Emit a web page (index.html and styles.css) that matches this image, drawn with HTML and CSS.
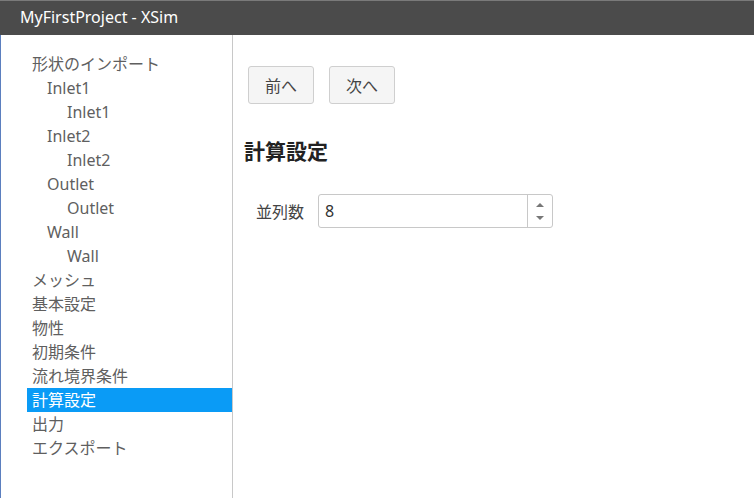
FILE: index.html
```html
<!DOCTYPE html>
<html lang="ja">
<head>
    <meta charset="UTF-8">
    <title>MyFirstProject - XSim</title>
    <link rel="stylesheet" href="styles.css">
</head>
<body>
    <!-- タイトルバー -->
    <div class="titlebar">MyFirstProject - XSim</div>

    <div class="window">
        <!-- 左のツリー -->
        <ul class="tree">
            <li class="lv0">形状のインポート</li>
            <li class="lv1">Inlet1</li>
            <li class="lv2">Inlet1</li>
            <li class="lv1">Inlet2</li>
            <li class="lv2">Inlet2</li>
            <li class="lv1">Outlet</li>
            <li class="lv2">Outlet</li>
            <li class="lv1">Wall</li>
            <li class="lv2">Wall</li>
            <li class="lv0">メッシュ</li>
            <li class="lv0">基本設定</li>
            <li class="lv0">物性</li>
            <li class="lv0">初期条件</li>
            <li class="lv0">流れ境界条件</li>
            <li class="lv0 selected">計算設定</li>
            <li class="lv0">出力</li>
            <li class="lv0">エクスポート</li>
        </ul>

        <!-- 右の設定画面 -->
        <div class="main">
            <div class="nav">
                <button class="btn">前へ</button>
                <button class="btn">次へ</button>
            </div>
            <h2>計算設定</h2>
            <div class="field">
                <label>並列数</label>
                <div class="spin">
                    <input type="text" value="8">
                    <div class="arrows">
                        <span class="up"></span>
                        <span class="down"></span>
                    </div>
                </div>
            </div>
        </div>
    </div>
</body>
</html>
```

FILE: styles.css
```css
body {
    margin: 0;
    padding: 0;
    font-family: "Noto Sans", "Noto Sans CJK JP", sans-serif;
    background: #fff;
    height: 498px;
    display: flex;
    flex-direction: column;
    overflow: hidden;
}

.titlebar {
    height: 34px;
    line-height: 33px;
    background: #4b4b4b;
    border-top: 1px solid #7a7a7a;
    color: #fff;
    font-size: 16px;
    padding-left: 20px;
}

.window {
    flex: 1;
    display: flex;
    border-left: 1px solid #5b7fbf;
}

/* ツリー */
.tree {
    list-style: none;
    margin: 0;
    padding: 17px 0 0 26px;
    width: 205px;
    border-right: 1px solid #c8c8c8;
    flex-shrink: 0;
}

.tree li {
    height: 24px;
    line-height: 24px;
    font-size: 16px;
    color: #5f5f5f;
    white-space: nowrap;
}

.tree .lv0 { padding-left: 5px; }
.tree .lv1 { padding-left: 20px; }
.tree .lv2 { padding-left: 40px; }

.tree .selected {
    background: #0a9bf6;
    color: #fff;
}

/* メイン */
.main {
    flex: 1;
    padding: 31px 0 0 11px;
    color: #333;
}

.nav {
    display: flex;
    gap: 15px;
    padding-left: 4px;
}

.btn {
    width: 66px;
    height: 38px;
    background: #f5f5f5;
    border: 1px solid #cfcfcf;
    border-radius: 3px;
    font-family: inherit;
    font-size: 16px;
    color: #444;
    padding: 0;
}

h2 {
    margin: 32px 0 0;
    font-size: 21px;
    font-weight: bold;
    color: #222;
    line-height: 30px;
}

.field {
    display: flex;
    align-items: center;
    margin-top: 28px;
    padding-left: 12px;
}

.field label {
    font-size: 16px;
    color: #444;
    width: 62px;
}

.spin {
    display: flex;
    width: 233px;
    height: 32px;
    border: 1px solid #c8c8c8;
    border-radius: 3px;
}

.spin input {
    flex: 1;
    border: none;
    outline: none;
    font-family: inherit;
    font-size: 16px;
    color: #333;
    padding: 0 6px;
    min-width: 0;
    background: transparent;
}

.arrows {
    width: 25px;
    border-left: 1px solid #c8c8c8;
    display: flex;
    flex-direction: column;
    align-items: center;
    justify-content: space-between;
    padding: 8px 0 7px;
    box-sizing: border-box;
}

.up, .down {
    width: 0;
    height: 0;
    border-left: 4px solid transparent;
    border-right: 4px solid transparent;
}

.up { border-bottom: 4px solid #777; }
.down { border-top: 4px solid #777; }
```
